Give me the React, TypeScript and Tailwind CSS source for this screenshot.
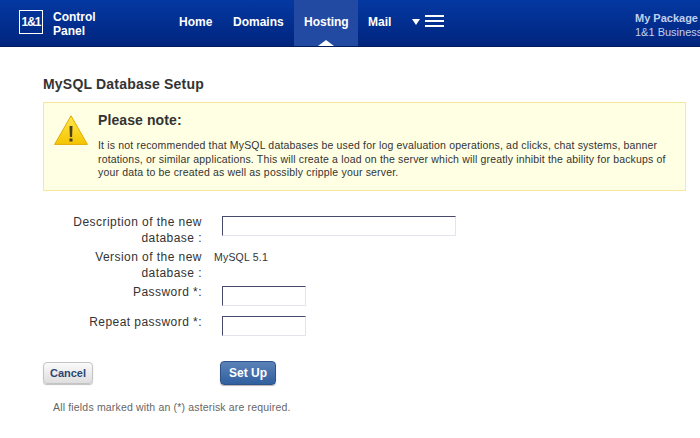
const font = { fontFamily: '"Liberation Sans", Arial, sans-serif' };

function Warning() {
  return (
    <svg width="34" height="30" viewBox="0 0 34 30" className="shrink-0">
      <defs>
        <linearGradient id="warn" x1="0" y1="0" x2="0" y2="1">
          <stop offset="0" stopColor="#ffe94d" />
          <stop offset="1" stopColor="#f5c400" />
        </linearGradient>
      </defs>
      <path d="M17 0.8 L33.4 29.4 L0.6 29.4 Z" fill="url(#warn)" stroke="#e0aa00" strokeWidth="1" strokeLinejoin="round" />
      <path d="M15.5 11 h3 l-0.4 11 h-2.2 z" fill="#4a4020" />
      <rect x="15.5" y="23.5" width="3" height="3" fill="#4a4020" />
    </svg>
  );
}

function Menu() {
  return (
    <div className="flex items-start ml-[10px] mt-[15px]">
      <svg width="8" height="6" viewBox="0 0 8 6" className="mt-[4px]">
        <path d="M0 0 H8 L4 6 Z" fill="#fff" />
      </svg>
      <div className="ml-[5px] w-[19px] flex flex-col gap-[3px]">
        <div className="h-[2px] bg-white" />
        <div className="h-[2px] bg-white" />
        <div className="h-[2px] bg-white" />
      </div>
    </div>
  );
}

function Label({ children }: { children: React.ReactNode }) {
  return <div className="w-[159px] pl-[13px] text-right text-[12px] leading-[16px] text-[#333] shrink-0 tracking-[0.45px]">{children}</div>;
}

const inputClass = "mt-[2px] h-[20px] bg-white border border-[#e4e4ee] border-t-[#46496a] border-l-[#46496a]";

export default function App() {
  return (
    <div className="w-[700px] h-[438px] overflow-hidden bg-white" style={font}>
      <header className="h-[47px] flex bg-gradient-to-b from-[#0438a2] to-[#01257e] border-b border-[#011a58] text-white font-bold w-[700px] overflow-hidden">
        <div className="ml-[19px] mt-[10px] w-[24px] h-[24px] border border-white flex items-center justify-center text-[12px] tracking-[-1px] shrink-0">1&amp;1</div>
        <div className="ml-[10px] mt-[10px] text-[12px] leading-[14px] w-[60px] shrink-0">
          <div>Control</div>
          <div>Panel</div>
        </div>
        <nav className="flex text-[12px] ml-[66px] shrink-0">
          <div className="pt-[13px] w-[54px]">Home</div>
          <div className="pt-[13px] w-[61px]">Domains</div>
          <div className="relative pt-[13px] w-[64px] pl-[10px] bg-[#234aa3]">
            Hosting
            <div className="absolute bottom-0 left-[24px] w-0 h-0 border-x-[8px] border-x-transparent border-b-[6px] border-b-white" />
          </div>
          <div className="pt-[13px] pl-[10px] w-[44px]">Mail</div>
          <Menu />
        </nav>
        <div className="ml-[191px] pt-[11px] text-[11px] leading-[14px] text-[#c0cfef] whitespace-nowrap shrink-0">
          <div>My Package</div>
          <div className="font-normal">1&amp;1 Business</div>
        </div>
      </header>

      <main className="pl-[43px] w-[686px] box-content">
        <h1 className="mt-[28px] text-[14px] leading-[18px] font-bold text-[#333] tracking-[0.2px]">MySQL Database Setup</h1>
        <div className="mt-[9px] h-[89px] w-[643px] border border-[#f7e79a] bg-[#ffffe3] flex">
          <div className="ml-[10px] mt-[12px]"><Warning /></div>
          <div className="ml-[10px]">
            <h2 className="mt-[8px] text-[14px] leading-[18px] font-bold text-[#333] tracking-[0.1px]">Please note:</h2>
            <p className="mt-[10px] text-[10.5px] leading-[13.5px] text-[#333] w-[590px] tracking-[0.17px]">
              It is not recommended that MySQL databases be used for log evaluation operations, ad clicks, chat systems, banner rotations, or similar applications. This will create a load on the server which will greatly inhibit the ability for backups of your data to be created as well as possibly cripple your server.
            </p>
          </div>
        </div>

        <form className="mt-[23px] flex flex-col">
          <div className="flex h-[35px]">
            <Label>Description of the new database :</Label>
            <div className={`ml-[20px] w-[234px] ${inputClass}`} />
          </div>
          <div className="flex h-[35px]">
            <Label>Version of the new database :</Label>
            <div className="ml-[12px] text-[10.5px] leading-[17px] text-[#333] tracking-[0.2px]">MySQL 5.1</div>
          </div>
          <div className="flex h-[30px]">
            <Label>Password *:</Label>
            <div className={`ml-[20px] w-[84px] ${inputClass}`} />
          </div>
          <div className="flex h-[30px]">
            <Label>Repeat password *:</Label>
            <div className={`ml-[20px] w-[84px] ${inputClass}`} />
          </div>
        </form>

        <div className="mt-[16px] flex items-start">
          <button className="mt-[2px] w-[50px] h-[22px] rounded-[4px] border border-[#c4c4c4] bg-gradient-to-b from-[#fafafa] to-[#dedede] text-[11px] font-bold text-[#2d4672] shadow-[0_1px_1px_rgba(0,0,0,0.25)]">Cancel</button>
          <button className="mt-[1px] ml-[127px] w-[56px] h-[24px] rounded-[4px] border border-[#2f5288] bg-gradient-to-b from-[#5b82b8] to-[#31609f] text-[12px] font-bold text-white shadow-[0_1px_1px_rgba(0,0,0,0.3)]">Set Up</button>
        </div>
        <p className="mt-[15px] ml-[10px] text-[10.5px] leading-[14px] text-[#666] tracking-[0.17px]">All fields marked with an (*) asterisk are required.</p>
      </main>
    </div>
  );
}
